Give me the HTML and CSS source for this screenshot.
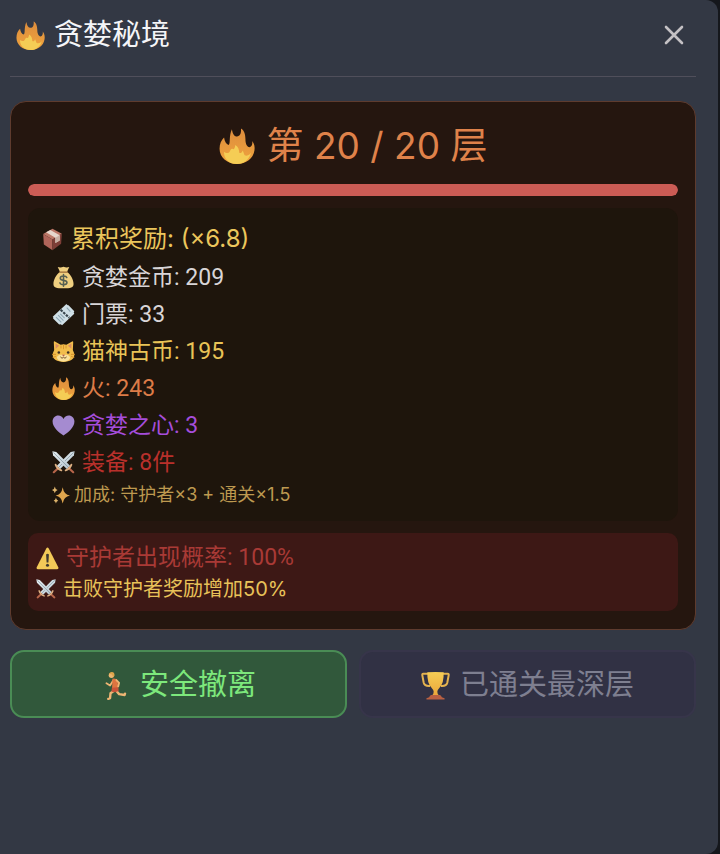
FILE: index.html
```html
<!DOCTYPE html>
<html lang="zh-Hans">
<head>
  <meta charset="UTF-8">
  <meta name="viewport" content="width=device-width, initial-scale=1">
  <title>贪婪秘境</title>
  <link rel="stylesheet" href="styles.css">
</head>
<body>

<!-- 图标 -->
<svg class="sprite" aria-hidden="true">
  <defs>
    <linearGradient id="flameOuter" x1="0" y1="0" x2="0" y2="1">
      <stop offset="0" stop-color="#dd8c3c"/>
      <stop offset="1" stop-color="#f0a43e"/>
    </linearGradient>
    <linearGradient id="steel" x1="0" y1="0" x2="1" y2="1">
      <stop offset="0" stop-color="#e6eef2"/>
      <stop offset="1" stop-color="#b3c4ce"/>
    </linearGradient>
    <linearGradient id="cup" x1="0" y1="0" x2="0" y2="1">
      <stop offset="0" stop-color="#f6cd55"/>
      <stop offset="1" stop-color="#eba73b"/>
    </linearGradient>
  </defs>

  <symbol id="fire" viewBox="0 0 32 32">
    <path fill="url(#flameOuter)" d="M4.5 8.5C5 12 6.500 14.500 8.500 15C10.500 14 8.500 7 11.500 1C12 5 13.500 7.500 16 7.500C18.500 7.500 20 5 19.500 .5C22.500 2 23.500 6 23.500 10C23.500 14 25 17 27 17C29 17 30 14 29.500 11.500C31.500 14 32 17 31.500 20C30.500 27 24 32 16 32C7 32 .5 26 .5 18.500C.5 14 2 11 4.500 8.500Z"/>
    <path fill="#f5cd55" d="M4.500 21C5.500 22 7 22.500 8.500 22C10 21.500 10 18 12 18.500C13 19.500 14 18.500 14.500 15C17 16.500 18 19 18 22C19.500 23 20.500 21.500 21 20C22 21 22 24 23.500 24.500C26 25 28 23 28.500 22C27 28 22 32 16 32C9 32 4 27 4.500 21Z"/>
  </symbol>

  <symbol id="box" viewBox="0 0 32 32">
    <path fill="#bd7868" d="M3 8.500L16 1L29 8L16 16Z"/>
    <path fill="#b0655a" d="M3 8.500L16 16V31L4 23Z"/>
    <path fill="#7d3e37" d="M16 16L29 8L28 22L16 31Z"/>
    <path fill="#e7d7cd" d="M7 6L13 2.700L26 10V17.500L20 21V13.500Z"/>
    <path fill="#c9b0a4" d="M20 13.500L26 10V17.500L20 21Z"/>
  </symbol>

  <symbol id="moneybag" viewBox="0 0 32 32">
    <path fill="#efcf80" d="M8 1.500Q12 3 16 1Q20 3 24 1.500L21 8C26 12 30 19 30 25C30 30 26 31 16 31S2 30 2 25C2 19 6 12 11 8Z"/>
    <path fill="none" stroke="#9b6b36" stroke-width="2" stroke-linecap="round" d="M10.500 8.500H21.500"/>
    <path fill="none" stroke="#566052" stroke-width="2.200" stroke-linecap="round" d="M20.500 16C20 14.500 18 14 16 14C13.500 14 11.500 15 11.500 17C11.500 21.500 20.800 18.500 20.800 23C20.800 25 18.500 26 16 26C13.500 26 11.500 25.200 11 23.500M16 12V28"/>
  </symbol>

  <symbol id="ticket" viewBox="0 0 32 32">
    <path fill="#cfdfe6" d="M1 19L20 1.500Q21 3.500 23 3L31 11.500Q29.500 13.500 31 15L14 31Q12 29 10 30L1.500 21.500Q2.500 20 1 19Z"/>
    <path fill="none" stroke="#35434c" stroke-width="3" stroke-dasharray="3.500 1.500" d="M12 9.500L24 20.500"/>
    <path fill="none" stroke="#8da7b5" stroke-width="1.500" d="M5.500 19.500L13 27M8.500 17L16 24.500M11.500 15L17.500 21M20.500 6.500L25.500 12"/>
  </symbol>

  <symbol id="cat" viewBox="0 0 32 32">
    <path fill="#f2bd4c" d="M2.500 3Q2.500 1.500 4 2L12 6.500Q16 5.500 20 6.500L28 2Q29.500 1.500 29.500 3L29 14Q31 18 31 21C31 27 25 30.500 16 30.500S1 27 1 21Q1 18 3 14Z"/>
    <path fill="#d98d62" d="M5 5L10 8L5 12ZM27 5L22 8L27 12Z"/>
    <path fill="#fae19b" d="M16 21C11 19 6 22 7 25.500C8.500 29 12 30 16 30S23.500 29 25 25.500C26 22 21 19 16 21Z"/>
    <path fill="none" stroke="#d9962f" stroke-width="1.400" stroke-linecap="round" d="M16 7V12M12.500 8V11M19.500 8V11M1 20H5M1.500 24L5 23M31 20H27M30.500 24L27 23"/>
    <circle cx="9.500" cy="17.500" r="1.800" fill="#3e3025"/>
    <circle cx="22.500" cy="17.500" r="1.800" fill="#3e3025"/>
    <path fill="#b75d50" d="M13.800 20.500H18.200L16 23Z"/>
    <path fill="none" stroke="#6e4a2c" stroke-width="1.300" stroke-linecap="round" d="M12 24Q14 27 16 24Q18 27 20 24"/>
  </symbol>

  <symbol id="heart" viewBox="0 0 32 32">
    <path fill="#a58bd0" d="M16 30C10 26 .8 19 .8 10.500C.8 5.500 4.300 2 8.700 2C12 2 14.700 3.800 16 7C17.300 3.800 20 2 23.300 2C27.700 2 31.200 5.500 31.200 10.500C31.200 19 22 26 16 30Z"/>
  </symbol>

  <symbol id="swords" viewBox="0 0 32 32">
    <path fill="url(#steel)" d="M31.500 .5L30.500 6L11 25.500L6.500 21L26 1.500Z"/>
    <path fill="none" stroke="#71838e" stroke-width=".8" d="M30 2L9.500 22.500"/>
    <path fill="url(#steel)" d="M.5 .5L1.500 6L21 25.500L25.500 21L6 1.500Z"/>
    <path fill="none" stroke="#71838e" stroke-width=".8" d="M2 2L22.500 22.500"/>
    <path fill="none" stroke="#b7654a" stroke-width="3" stroke-linecap="round" d="M2.500 29.500L8.500 24M29.500 29.500L23.500 24"/>
    <path fill="none" stroke="#ddb083" stroke-width="2.500" stroke-linecap="round" d="M5 19Q7 25 13 27M27 19Q25 25 19 27"/>
  </symbol>

  <symbol id="sparkles" viewBox="0 0 32 32">
    <path fill="#e0a64d" d="M19 2Q21 15 32 17Q21 19 19 31Q17 19 6.500 17Q17 15 19 2Z"/>
    <path fill="#dfb56c" d="M5 1Q5.500 6 10 7Q5.500 8 5 13Q4.500 8 0 7Q4.500 6 5 1ZM7 21Q7.500 25 11 26Q7.500 27 7 31Q6.500 27 3 26Q6.500 25 7 21Z"/>
  </symbol>

  <symbol id="warning" viewBox="0 0 32 32">
    <path fill="#f3ca58" d="M14.300 2.200Q16 -.5 17.700 2.200L31 28Q32 31 29 31H3Q0 31 1 28Z"/>
    <path fill="#3e3930" d="M14 10.500Q16 8.500 18 10.500L17.300 21.500H14.700Z"/>
    <circle cx="16" cy="25.500" r="2.100" fill="#3e3930"/>
  </symbol>

  <symbol id="runner" viewBox="0 0 32 32">
    <path fill="none" stroke="#eeb574" stroke-width="2" stroke-linecap="round" stroke-linejoin="round" d="M13.500 10.500L10 16L6 13.500"/>
    <path fill="none" stroke="#eeb574" stroke-width="2.600" stroke-linecap="round" stroke-linejoin="round" d="M14 22L10.500 24.500L10 30L8 30.800M17 22L20 25.500L26 26.500L26.500 25"/>
    <path fill="#de7440" d="M12.500 8.500Q17 7.500 18.500 11.500L19 20L12 21.500L12.500 14Z"/>
    <path fill="#c9543a" d="M12 18.500L19 18L19.500 22L15.500 23.500L11.500 23Z"/>
    <path fill="none" stroke="#eeb574" stroke-width="2" stroke-linecap="round" stroke-linejoin="round" d="M17 10L20 13L19 17"/>
    <circle cx="11.500" cy="4.800" r="3" fill="#efb672"/>
    <path fill="#dda54a" d="M8.500 3Q10.500 .5 13.500 1.500Q16 3.500 14 7Q13 5 11.500 3.500Z"/>
  </symbol>

  <symbol id="trophy" viewBox="0 0 32 32">
    <path fill="none" stroke="#e4b350" stroke-width="2.200" d="M8 3H2.500Q1 3 1.500 5L3 13Q4 17 10 16.500M24 3H29.500Q31 3 30.500 5L29 13Q28 17 22 16.500"/>
    <path fill="url(#cup)" d="M7 1.500Q16 .5 25 1.500Q25.500 14 20 19Q18 21 18 23Q18 26 20 27H12Q14 26 14 23Q14 21 12 19Q6.500 14 7 1.500Z"/>
    <path fill="#b96042" d="M11 26.500H21Q22.500 27.500 23 29L26 30V31.500H6V30L9 29Q9.500 27.500 11 26.500Z"/>
  </symbol>

  <symbol id="close" viewBox="0 0 20 20">
    <path fill="none" stroke="currentColor" stroke-width="2.600" stroke-linecap="round" d="M2 2L18 18M18 2L2 18"/>
  </symbol>
</svg>

<main class="panel">
  <header class="panel-header">
    <h1 class="panel-title"><svg class="icon icon-lg"><use href="#fire"/></svg>贪婪秘境</h1>
    <button type="button" class="close-button" aria-label="关闭"><svg class="icon icon-sm"><use href="#close"/></svg></button>
  </header>

  <section class="card">
    <h2 class="floor"><svg class="icon icon-xl"><use href="#fire"/></svg>第 20 / 20 层</h2>
    <div class="progress" role="progressbar" aria-label="层数" aria-valuemin="0" aria-valuemax="20" aria-valuenow="20">
      <div class="progress-fill" style="width: 100%"></div>
    </div>

    <div class="rewards">
      <h3 class="rewards-title"><svg class="icon"><use href="#box"/></svg>累积奖励: (×6.8)</h3>
      <ul class="reward-list">
        <li class="reward"><svg class="icon"><use href="#moneybag"/></svg>贪婪金币: 209</li>
        <li class="reward"><svg class="icon"><use href="#ticket"/></svg>门票: 33</li>
        <li class="reward gold"><svg class="icon"><use href="#cat"/></svg>猫神古币: 195</li>
        <li class="reward orange"><svg class="icon"><use href="#fire"/></svg>火: 243</li>
        <li class="reward purple"><svg class="icon"><use href="#heart"/></svg>贪婪之心: 3</li>
        <li class="reward red"><svg class="icon"><use href="#swords"/></svg>装备: 8件</li>
      </ul>
      <p class="bonus"><svg class="icon icon-xs"><use href="#sparkles"/></svg>加成: 守护者×3 + 通关×1.5</p>
    </div>

    <div class="guardian">
      <p class="guardian-rate"><svg class="icon"><use href="#warning"/></svg>守护者出现概率: 100%</p>
      <p class="guardian-bonus"><svg class="icon icon-sm"><use href="#swords"/></svg>击败守护者奖励增加50%</p>
    </div>
  </section>

  <div class="actions">
    <button type="button" class="button button-leave"><svg class="icon icon-lg"><use href="#runner"/></svg>安全撤离</button>
    <button type="button" class="button" disabled><svg class="icon icon-lg"><use href="#trophy"/></svg>已通关最深层</button>
  </div>
</main>

</body>
</html>
```

FILE: styles.css
```css
* {
  box-sizing: border-box;
}

body {
  margin: 0;
  background-color: #15171c;
  font-family: Inter, "Noto Sans CJK SC", sans-serif;
}

h1,
h2,
h3,
p,
ul {
  margin: 0;
  padding: 0;
  font-weight: normal;
}

.sprite {
  position: absolute;
  width: 0;
  height: 0;
}

.icon {
  flex: none;
  width: 23px;
  height: 23px;
}

.icon-xs {
  width: 18px;
  height: 18px;
}

.icon-sm {
  width: 20px;
  height: 20px;
}

.icon-lg {
  width: 29px;
  height: 29px;
}

.icon-xl {
  width: 36px;
  height: 36px;
}

.panel {
  min-height: 100vh;
  margin-right: 2px;
  padding: 0 22px 24px 10px;
  border-radius: 0 12px 12px 0;
  background-color: #333844;
}

.panel-header {
  display: flex;
  align-items: center;
  justify-content: space-between;
  padding: 13px 12px 19px 6px;
  border-bottom: 1px solid #504f5b;
}

.panel-title {
  display: flex;
  align-items: center;
  gap: 9px;
  font-size: 29px;
  line-height: 44px;
  color: #f4f5f8;
}

.close-button {
  display: flex;
  padding: 0;
  border: none;
  background: none;
  color: #c4c1c4;
  cursor: pointer;
}

.card {
  display: flex;
  flex-direction: column;
  gap: 12px;
  margin-top: 24px;
  padding: 18px 17px;
  border: 1px solid #5e3b2e;
  border-radius: 16px;
  background-color: #25160f;
}

.floor {
  display: flex;
  align-items: center;
  justify-content: center;
  gap: 12px;
  font-size: 37px;
  line-height: 52px;
  color: #df824a;
}

.progress {
  height: 12px;
  border-radius: 6px;
  overflow: hidden;
  background-color: #3a211c;
}

.progress-fill {
  height: 100%;
  border-radius: 6px;
  background-color: #cb5c55;
}

.rewards {
  padding: 13px 13px 12px;
  border-radius: 12px;
  background-color: #1e150c;
}

.rewards-title,
.reward,
.bonus,
.guardian-rate,
.guardian-bonus {
  display: flex;
  align-items: center;
  gap: 7px;
}

.rewards-title {
  margin-bottom: 2px;
  font-size: 24px;
  line-height: 36px;
  color: #ebc65c;
}

.reward-list {
  padding-left: 11px;
  list-style: none;
}

.reward {
  font-family: Roboto, "Noto Sans CJK SC", sans-serif;
  font-size: 23px;
  line-height: 37px;
  color: #d9d5d7;
}

.gold {
  color: #e9c457;
}

.orange {
  color: #dc7c48;
}

.purple {
  color: #a54ddb;
}

.red {
  color: #b9302b;
}

.bonus {
  padding-left: 11px;
  gap: 4px;
  font-size: 18px;
  line-height: 28px;
  color: #bd9950;
}

.guardian {
  padding: 8px;
  border-radius: 10px;
  background-color: #3d1815;
}

.guardian-rate {
  font-family: Roboto, "Noto Sans CJK SC", sans-serif;
  font-size: 23px;
  line-height: 34px;
  color: #a93a36;
}

.guardian-bonus {
  font-size: 20px;
  line-height: 28px;
  color: #e8c259;
}

.actions {
  display: grid;
  grid-template-columns: 1fr 1fr;
  gap: 12px;
  margin-top: 20px;
}

.button {
  display: flex;
  align-items: center;
  justify-content: center;
  gap: 10px;
  padding: 11px 10px 9px;
  border: 2px solid #4a8c55;
  border-radius: 14px;
  background-color: #31583b;
  font-family: inherit;
  font-size: 29px;
  line-height: 44px;
  color: #7de87c;
  cursor: pointer;
}

.button:disabled {
  border-color: #37354a;
  background-color: #313144;
  color: #7e7f90;
  cursor: not-allowed;
}

@media (max-width: 480px) {
  .actions {
    grid-template-columns: 1fr;
  }
}
```
